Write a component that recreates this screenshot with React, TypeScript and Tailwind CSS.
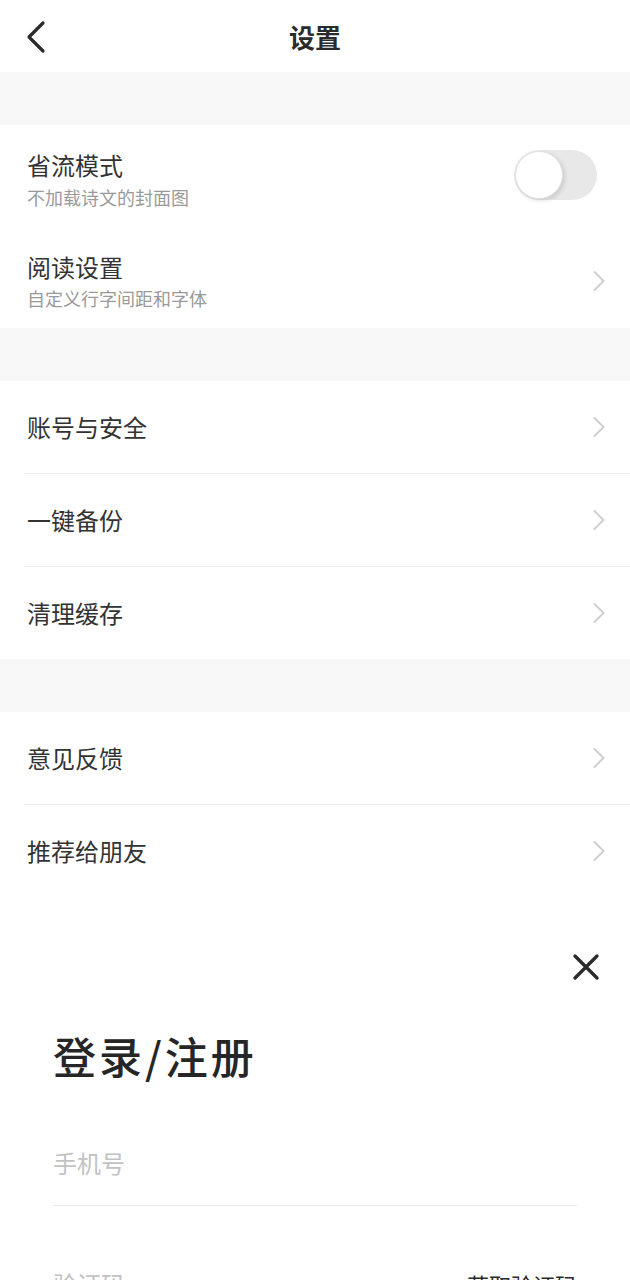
import React, { useState } from "react";

const font = { fontFamily: '"Noto Sans CJK SC", "Noto Sans", sans-serif' };

function Chevron() {
  return (
    <svg width="14" height="22" viewBox="0 0 14 22" fill="none" className="shrink-0">
      <path d="M2.5 2 L11.5 11 L2.5 20" stroke="#cfcfcf" strokeWidth="2" strokeLinecap="round" strokeLinejoin="round" />
    </svg>
  );
}

function Row({ title, divider }: { title: string; divider?: boolean }) {
  return (
    <div className="relative">
      {divider && <div className="ml-6 h-px bg-[#ececec]" />}
      <div className="flex h-[92px] items-center justify-between pl-[27px] pr-[24px]">
        <span className="text-[24px] leading-8 text-[#333]">{title}</span>
        <Chevron />
      </div>
    </div>
  );
}

function Gap() {
  return <div className="h-[53px] bg-[#f8f8f8]" />;
}

export default function App() {
  const [saving, setSaving] = useState(false);

  return (
    <div className="min-h-screen bg-white" style={font}>
      {/* 标题栏 */}
      <header className="relative flex h-[72px] items-center justify-center">
        <button className="absolute left-[24px] top-[20px]">
          <svg width="24" height="34" viewBox="0 0 24 34" fill="none">
            <path d="M19 3 L5 17 L19 31" stroke="#2b2b2b" strokeWidth="3.2" strokeLinecap="round" strokeLinejoin="round" />
          </svg>
        </button>
        <h1 className="text-[26px] font-bold text-[#2b2b2b]">设置</h1>
      </header>

      <Gap />

      <section>
        <div className="flex items-center justify-between pl-[27px] pr-[33px] pt-6 pb-[18px]">
          <div>
            <div className="text-[24px] leading-8 text-[#333]">省流模式</div>
            <div className="mt-[4px] text-[18px] leading-6 text-[#9a9a9a]">不加载诗文的封面图</div>
          </div>
          <button
            onClick={() => setSaving(!saving)}
            className={
              saving
                ? "mb-[8px] flex h-[50px] w-[83px] items-center justify-end rounded-full bg-[#4cd964] p-[1px]"
                : "mb-[8px] flex h-[50px] w-[83px] items-center justify-start rounded-full bg-[#e8e8e8] p-[1px]"
            }
          >
            <span className="h-[48px] w-[48px] rounded-full border border-[#e2e2e2] bg-white shadow-[2px_2px_4px_rgba(0,0,0,0.12)]" />
          </button>
        </div>
        <div className="flex items-center justify-between pl-[27px] pr-[24px] pt-6 pb-[18px]">
          <div>
            <div className="text-[24px] leading-8 text-[#333]">阅读设置</div>
            <div className="mt-[3px] text-[18px] leading-6 text-[#9a9a9a]">自定义行字间距和字体</div>
          </div>
          <Chevron />
        </div>
      </section>

      <Gap />

      <section>
        <Row title="账号与安全" />
        <Row title="一键备份" divider />
        <Row title="清理缓存" divider />
      </section>

      <Gap />

      <section>
        <Row title="意见反馈" />
        <Row title="推荐给朋友" divider />
      </section>

      {/* 登录 */}
      <section className="px-[53px] pt-[56px]">
        <div className="flex justify-end">
          <button className="mr-[-23px]">
            <svg width="28" height="28" viewBox="0 0 28 28" fill="none">
              <path d="M3 3 L25 25 M25 3 L3 25" stroke="#2b2b2b" strokeWidth="3.4" strokeLinecap="round" />
            </svg>
          </button>
        </div>
        <h2 className="mt-[48px] text-[43px] font-medium leading-[52px] tracking-[3px] text-[#262626]">登录/注册</h2>
        <div className="mt-[66px] border-b border-[#e9e9e9] pb-[26px]">
          <input
            placeholder="手机号"
            className="w-full text-[24px] leading-8 text-[#333] outline-none placeholder:text-[#c2c2c2]"
          />
        </div>
        <div className="mt-[62px] flex items-center justify-between pb-[26px]">
          <input
            placeholder="验证码"
            className="w-[300px] text-[24px] leading-8 text-[#333] outline-none placeholder:text-[#c2c2c2]"
          />
          <button className="text-[22px] leading-8 text-[#2b2b2b]">获取验证码</button>
        </div>
      </section>
    </div>
  );
}
